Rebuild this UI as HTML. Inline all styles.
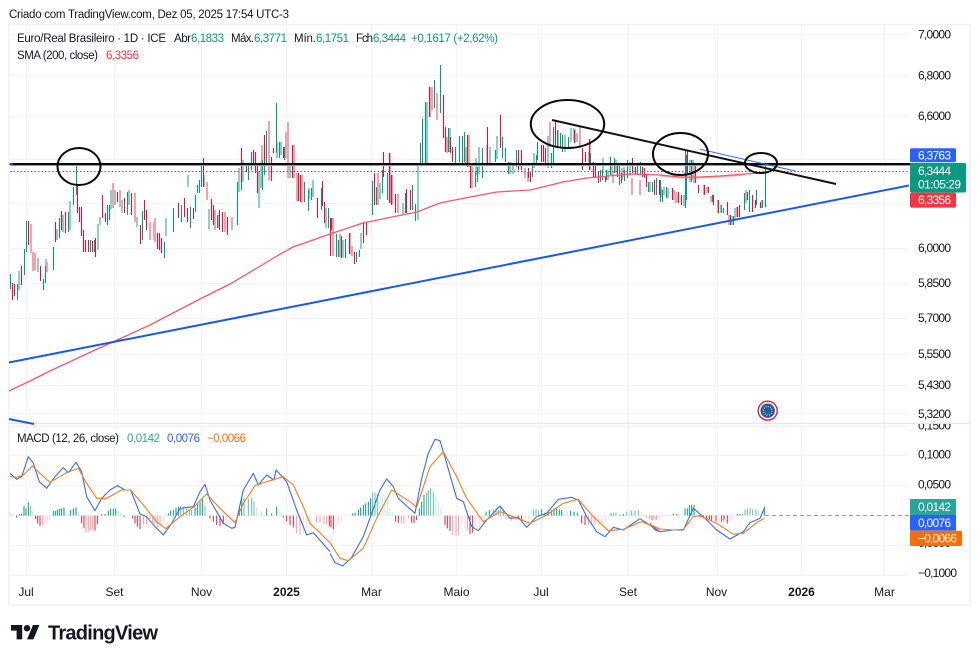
<!DOCTYPE html>
<html><head><meta charset="utf-8"><title>Euro/Real</title>
<style>
html,body{margin:0;padding:0;background:#fff;width:980px;height:661px;overflow:hidden}
svg{display:block;filter:blur(.3px)}
text{font-family:"Liberation Sans",sans-serif;font-size:11.5px;fill:#131722}
.ax{font-size:12px}
.w{fill:#fff;font-size:12px}
.g{fill:#089981}.r{fill:#f23645}.b{fill:#2962ff}.o{fill:#ff6d00}
.h path{vector-effect:non-scaling-stroke}
</style></head><body>
<svg width="980" height="661" viewBox="0 0 980 661" xmlns="http://www.w3.org/2000/svg">
<rect width="980" height="661" fill="#fff"/>
<text x="9" y="18" textLength="280">Criado com TradingView.com, Dez 05, 2025 17:54 UTC-3</text>
<rect x="9" y="24.5" width="961" height="580.5" fill="none" stroke="#f0f1f3" stroke-width="1.5"/>
<!-- grid -->
<path stroke="#f2f3f5" fill="none" d="M26.5 25V575M114.5 25V575M201.5 25V575M286.5 25V575M371.5 25V575M456.5 25V575M541.5 25V575M628.5 25V575M717.5 25V575M801.5 25V575M884.5 25V575M10 34.5H909M10 75.5H909M10 116.5H909M10 159.5H909M10 203.5H909M10 248.5H909M10 283.5H909M10 318.5H909M10 354.5H909M10 385.5H909M10 413.5H909M10 426.5H909M10 455.5H909M10 485.5H909M10 515.5H909M10 545.5H909M10 575.5H909"/>
<path stroke="#e4e6ea" stroke-width="1.2" d="M9 423.5H970"/>
<!-- candles pale -->
<g fill="none">
<path stroke="#8fd0c4" stroke-width="2" d="M19 271V290M38 258V272M46 259V271M57 229V240M63 215V232M70 201V230M98 224V250M100 217V225M111 190V209M115 190V205M122 200V213M129 190V205M137 217V227M166 218V236M188 175V187M204 175V187M209 209V229M219 215V228M232 217V230M239 168V192M243 160V182M259 172V208M261 162V188M277 142V158M281 142V155M290 163V178M309 188V199M313 180V197M326 208V228M340 234V257M343 240V257M361 233V249M378 187V205M380 183V199M403 203V215M418 165V220M427 102V165M450 128V152M466 147V163M476 158V175M479 147V174M490 147V163M497 136V159M510 162V174M513 165V174M534 153V168M548 136V168M558 130V148M565 135V152M571 128V142M574 128V140M577 133V142M589 152V162M603 158V173M612 163V175M661 187V197M664 187V195M678 195V202M684 195V206M690 160V182M693 160V180M721 205V213M732 216V225M735 208V220M746 190V203M762 200V208M608 170V180M616 160V173M622 168V180M630 162V176M650 182V192M668 188V198"/>
<path stroke="#f5a3a9" stroke-width="2" d="M31 224V253M33 252V271M35 253V270M47 262V272M113 183V208M120 190V207M135 193V222M150 222V240M154 222V240M155 218V242M207 182V200M215 210V230M225 212V232M232 217V228M262 145V163M269 121V180M286 132V158M288 122V178M294 145V178M297 173V201M302 175V202M333 218V256M350 233V254M352 246V256M378 173V205M390 153V203M392 175V205M398 194V213M430 87V117M432 87V110M437 93V120M447 137V153M469 135V167M472 163V188M487 145V166M525 168V178M528 172V182M550 122V147M575 130V143M580 127V148M590 139V170M613 172V183M624 167V177M632 178V195M640 180V195M694 163V183M704 185V195M707 187V193M711 196V202M718 200V213M729 215V225M737 207V217M674 190V200M676 192V203"/>
<path stroke="#089981" stroke-width="1.100" d="M10.500 274V289M17.500 284V300M24.500 249V275M26.500 221V252M43.500 279V290M45.500 266V283M53.500 247V270M59.500 218V238M68.500 212V232M73.500 187V205M76.500 163V195M90.500 240V252M94.500 240V252M107.500 205V225M109.500 205V220M127.500 192V215M142.500 211V240M164.500 242V258M173.500 208V232M181.500 205V222M190.500 207V228M195.500 195V212M197.500 185V193M199.500 180V193M201.500 163V187M213.500 215V225M217.500 215V228M237.500 182V225M241.500 170V190M248.500 163V180M251.500 152V170M262.500 160V190M264.500 150V175M266.500 131V165M276.500 103V153M279.500 142V158M284.500 147V160M304.500 182V202M308.500 190V211M311.500 188V200M321.500 188V210M328.500 208V228M336.500 234V257M338.500 240V257M345.500 239V258M356.500 252V262M359.500 250V257M372.500 181V215M376.500 187V205M382.500 170V193M387.500 173V200M405.500 193V213M412.500 185V210M415.500 204V221M420.500 143V165M422.500 119V165M425.500 102V165M434.500 80V108M440.500 65V113M448.500 128V152M455.500 147V163M459.500 136V162M462.500 136V163M464.500 132V162M475.500 172V187M477.500 167V182M482.500 148V178M495.500 150V162M502.500 137V158M505.500 148V162M508.500 162V174M516.500 150V167M532.500 165V177M536.500 155V165M537.500 142V160M551.500 153V168M553.500 127V163M557.500 130V148M560.500 133V147M562.500 135V152M568.500 137V148M590.500 153V165M600.500 170V182M602.500 170V180M606.500 170V180M610.500 157V175M614.500 158V173M619.500 165V185M624.500 170V181M627.500 160V178M637.500 163V175M640.500 162V175M648.500 182V192M652.500 182V192M656.500 178V195M660.500 180V202M662.500 190V202M666.500 187V198M685.500 150V208M686.500 155V200M691.500 160V182M712.500 195V202M721.500 205V213M723.500 208V213M733.500 216V225M744.500 193V210M749.500 190V212M756.500 190V205M762.500 200V208M765.500 165V207"/>
<path stroke="#d7153f" stroke-width="1.100" d="M12.500 283V300M14.500 284V296M21.500 266V285M28.500 221V245M40.500 266V281M55.500 222V242M61.500 211V230M65.500 212V233M77.500 185V213M79.500 207V222M81.500 207V236M83.500 230V252M85.500 240V252M88.500 240V252M92.500 241V252M95.500 238V257M102.500 195V218M105.500 213V222M117.500 192V202M124.500 198V213M131.500 193V215M140.500 225V244M144.500 200V220M146.500 210V230M157.500 233V249M159.500 233V250M161.500 238V253M178.500 203V218M184.500 198V217M187.500 208V222M193.500 208V219M203.500 158V187M211.500 199V220M213.500 205V225M219.500 210V230M222.500 212V232M227.500 217V235M241.500 148V182M246.500 163V172M253.500 150V165M255.500 152V173M257.500 163V193M264.500 135V163M271.500 157V181M273.500 148V153M283.500 147V158M292.500 145V178M298.500 173V201M300.500 175V202M317.500 198V218M322.500 181V206M324.500 202V223M330.500 218V256M331.500 218V230M341.500 236V258M349.500 233V254M354.500 252V264M363.500 223V243M366.500 222V235M374.500 173V205M383.500 152V177M389.500 153V203M391.500 175V205M395.500 194V213M406.500 189V213M410.500 190V210M429.500 87V117M443.500 95V138M445.500 127V152M450.500 137V153M452.500 147V162M467.500 135V167M470.500 163V188M487.500 127V165M500.500 115V148M518.500 150V170M521.500 150V170M528.500 168V178M530.500 172V182M545.500 148V163M543.500 145V162M541.500 145V162M555.500 122V147M574.500 130V143M582.500 148V170M585.500 152V162M589.500 139V170M593.500 162V177M595.500 163V178M598.500 172V183M605.500 177V182M617.500 166V177M621.500 173V183M632.500 158V173M635.500 167V174M642.500 167V177M644.500 168V178M646.500 175V187M654.500 180V195M659.500 180V195M672.500 188V200M678.500 192V203M681.500 195V205M687.500 150V173M695.500 163V183M698.500 185V193M704.500 185V195M708.500 187V193M713.500 195V205M718.500 200V213M727.500 202V215M730.500 215V225M737.500 207V217M739.500 205V217M747.500 192V200M752.500 195V212M755.500 200V208M760.500 202V208"/>
</g>
<!-- SMA -->
<path fill="none" stroke="#ef5a69" stroke-width="1.300" d="M9 391L30 381L50 371L80 357L115 341L150 325L200 299L230 284L257 268L277 256L293 247L313 240L333 233L363 223L397 216L417 212L440 203L470 197L497 192L530 190L563 182L587 178L630 174L660 175L680 177L700 177L720 176L745 174L762 173"/>
<path fill="none" stroke="#ef5a69" stroke-width="1" opacity=".5" d="M660 176L680 178L700 178L720 177L745 175"/>
<!-- levels -->
<path d="M10 171.500H909" stroke="#089981" stroke-width="1" stroke-dasharray="1.500 2"/>
<path d="M10 165.500H947" stroke="#9a9a9a" stroke-width="1"/>
<path d="M10 164H947" stroke="#0a0a0a" stroke-width="2"/>
<path d="M9 164H13" stroke="#2962ff" stroke-width="1.500"/>
<!-- trendlines -->
<path d="M9 362.500L909 185.500" stroke="#1a5ae0" stroke-width="2"/>
<path d="M9 419L34 424" stroke="#1a5ae0" stroke-width="2"/>
<path d="M700 150L796 172" stroke="#2962ff" stroke-width="1" transform="translate(0,-.800)"/>
<path d="M552 120L836 184" stroke="#111" stroke-width="2"/>
<g fill="none" stroke="#0a0a0a" stroke-width="2">
<ellipse cx="79" cy="166.500" rx="21.500" ry="18.500"/>
<ellipse cx="567.500" cy="124" rx="36.700" ry="24"/>
<ellipse cx="680.500" cy="154" rx="27.500" ry="21"/>
<ellipse cx="761" cy="163" rx="16" ry="10"/>
</g>
<!-- EU icon -->
<circle cx="767.700" cy="410.700" r="9.500" fill="#fff" stroke="#e01e3c" stroke-width="1.400"/>
<circle cx="767.700" cy="410.700" r="7.200" fill="#1d5ea8"/>
<circle cx="767.700" cy="410.700" r="4.300" fill="none" stroke="#f0d030" stroke-width="1.300" stroke-dasharray="1 1.250"/>
<!-- legend -->
<text x="17" y="42" textLength="149">Euro/Real Brasileiro · 1D · ICE</text>
<text x="174" y="42" textLength="17">Abr</text><text class="g" x="191" y="42" textLength="33">6,1833</text>
<text x="231" y="42" textLength="23">Máx.</text><text class="g" x="254" y="42" textLength="33">6,3771</text>
<text x="294" y="42" textLength="22">Mín.</text><text class="g" x="316" y="42" textLength="33">6,1751</text>
<text x="356" y="42" textLength="17">Fch</text><text class="g" x="373" y="42" textLength="33">6,3444</text>
<text class="g" x="411" y="42" textLength="87">+0,1617 (+2,62%)</text>
<text x="17" y="59" textLength="81">SMA (200, close)</text><text class="r" x="106" y="59" textLength="33">6,3356</text>
<!-- histogram -->
<g fill="none" class="h">
<g transform="translate(0,420) scale(.33333)" stroke-width="1">
<path stroke="#b7e3dc" d="M30 287V278M37 287V282M98 287V272M198 287V278M205 287V282M235 287V275M355 287V270M362 287V277M770 287V262M785 287V275M840 287V278"/>
<path stroke="#5fbfb0" d="M92 287V258M542 287V258M550 287V262M560 287V265M568 287V270M575 287V270M615 287V258M732 287V232M745 287V235M755 287V232M762 287V245"/>
<path stroke="#089981" d="M58 287V282M65 287V280M72 287V258M78 287V265M85 287V247M160 287V273M166 287V273M172 287V270M178 287V267M185 287V265M192 287V262M212 287V270M220 287V265M228 287V262M305 287V282M315 287V282M325 287V272M332 287V266M340 287V266M347 287V266M505 287V280M512 287V272M520 287V270M528 287V263M535 287V260M585 287V262M592 287V250M600 287V245M607 287V235M718 287V260M725 287V235M800 287V265M815 287V280M830 287V260"/>
<path stroke="#fcd5d8" d="M135 287V315M142 287V312M148 287V300M298 287V295M490 287V305M498 287V295M680 287V315M690 287V312M700 287V305M910 287V340M920 287V325M930 287V310"/>
<path stroke="#f99ba3" d="M128 287V315M258 287V338M265 287V335M272 287V332M278 287V330M430 287V312M440 287V312M450 287V297M458 287V308M465 287V312M472 287V322M480 287V318M900 287V345M890 287V340M950 287V308M960 287V308M972 287V312M980 287V312"/>
<path stroke="#e2263f" d="M50 287V293M107 287V297M113 287V310M120 287V318M245 287V310M252 287V325M285 287V332M292 287V312M372 287V291M398 287V295M405 287V310M412 287V320M420 287V328M630 287V295M640 287V305M650 287V315M660 287V318M670 287V310M850 287V292M860 287V305M870 287V315M880 287V322M988 287V318"/>
</g>
<g transform="translate(330,420) scale(.33333)" stroke-width="1">
<path stroke="#c4e8e2" d="M60 287V282M150 287V225M158 287V222M165 287V225M172 287V240M180 287V262M187 287V275M318 287V230M325 287V245M333 287V265M705 287V278M712 287V275M935 287V275M898 287V272"/>
<path stroke="#5fbfb0" d="M128 287V218M135 287V218M142 287V222M290 287V218M295 287V210M302 287V205M310 287V215M490 287V268M498 287V265M505 287V270M512 287V262M520 287V268M610 287V268M618 287V268M625 287V272M850 287V278M858 287V278M890 287V275M905 287V272M915 287V272M925 287V270"/>
<path stroke="#089981" d="M68 287V280M75 287V278M85 287V268M92 287V262M100 287V255M107 287V250M115 287V245M122 287V235M268 287V265M275 287V245M282 287V225M468 287V275M478 287V270M635 287V268M645 287V278M655 287V272M665 287V270M672 287V265M680 287V262M688 287V268M695 287V270M722 287V272M732 287V275M742 287V278M843 287V280M870 287V284M880 287V282"/>
<path stroke="#fcd5d8" d="M18 287V318M25 287V312M35 287V305M45 287V290M395 287V318M405 287V325M438 287V325M448 287V325M455 287V315M462 287V310M585 287V305M595 287V300M805 287V310M815 287V310M825 287V305M835 287V295"/>
<path stroke="#f99ba3" d="M215 287V310M222 287V310M235 287V295M368 287V345M378 287V348M386 287V345M412 287V330M535 287V298M545 287V302M555 287V300M775 287V315M785 287V315M795 287V315M948 287V295M958 287V298M968 287V300M978 287V300"/>
<path stroke="#e2263f" d="M3 287V322M10 287V328M197 287V305M205 287V308M245 287V308M252 287V310M260 287V300M345 287V315M352 287V325M360 287V333M420 287V342M428 287V338M565 287V298M575 287V300M755 287V310M765 287V315"/>
</g>
<g transform="translate(650,390) scale(.33333)" stroke-width="1">
<path stroke="#f99ba3" d="M5 376V390M12 376V388M20 376V388"/>
<path stroke="#fcd5d8" d="M28 376V385M35 376V382M205 376V395M240 376V395M248 376V385"/>
<path stroke="#5fbfb0" d="M278 376V370M285 376V360M292 376V355M300 376V355M308 376V358M318 376V358"/>
<path stroke="#c4e8e2" d="M325 376V360M335 376V365"/>
<path stroke="#089981" d="M70 376V372M80 376V372M88 376V375M105 376V355M112 376V355M118 376V345M125 376V345M132 376V345M262 376V372M270 376V372M343 376V352"/>
<path stroke="#e2263f" d="M150 376V382M160 376V385M170 376V388M178 376V388M185 376V392M198 376V395M215 376V395M222 376V392M232 376V400"/>
</g>
</g>
<path d="M765 515.500H909" stroke="#9a9ca3" stroke-width="1" stroke-dasharray="4 3"/>
<!-- MACD lines -->
<g fill="none" stroke-linejoin="round" stroke-width="1.100" class="h">
<g transform="translate(0,420) scale(.33333)">
<path stroke="#3a6fe0" d="M30 160L50 178L65 170L85 110L100 130L118 185L140 205L165 170L190 143L205 158L228 127L245 155L260 230L285 272L305 235L330 210L352 197L375 210L392 210L420 282L440 290L465 320L490 345L515 310L540 265L580 260L600 215L615 193L630 240L670 310L695 325L705 322L730 210L760 160L775 195L800 165L822 180L828 150L860 185L890 270L920 345L940 338L990 395"/>
<path stroke="#f57c20" d="M30 170L50 172L70 165L97 138L125 165L150 187L200 158L235 145L260 190L290 235L320 235L365 210L392 210L430 255L470 305L497 326L540 290L580 262L620 222L660 265L705 308L730 250L765 197L800 185L850 170L880 195L910 260L930 310L990 368"/>
</g>
<g transform="translate(330,420) scale(.33333)">
<path stroke="#3a6fe0" d="M0 400L15 428L38 438L65 412L100 350L125 280L150 210L170 177L190 200L205 235L230 258L255 280L275 175L295 100L315 58L330 62L350 130L380 235L400 245L425 320L445 332L470 300L510 258L540 295L565 292L590 322L620 290L650 280L685 238L725 232L745 240L770 290L800 335L825 350L850 322L880 330L930 296L990 335"/>
<path stroke="#f57c20" d="M0 368L30 415L55 422L100 385L140 295L185 210L240 245L260 262L300 140L340 95L380 170L410 235L460 305L510 275L600 310L650 285L700 250L745 238L790 290L835 332L880 328L935 305L990 328"/>
</g>
<g transform="translate(650,390) scale(.33333)">
<path stroke="#3a6fe0" d="M0 400L15 420L30 425L70 420L100 420L130 355L160 380L200 420L240 447L280 425L300 398L330 385L345 350"/>
<path stroke="#f57c20" d="M0 403L30 417L70 420L100 418L130 380L150 377L200 400L250 433L280 430L320 398L343 385"/>
</g>
</g>
<text x="17" y="442" textLength="102">MACD (12, 26, close)</text>
<text x="127" y="442" textLength="33" style="fill:#22ab94">0,0142</text>
<text class="b" x="167" y="442" textLength="33">0,0076</text>
<text class="o" x="207" y="442" textLength="39">−0,0066</text>
<!-- axis -->
<text class="ax" x="918" y="38.500" textLength="33">7,0000</text>
<text class="ax" x="918" y="79.500" textLength="33">6,8000</text>
<text class="ax" x="918" y="120" textLength="33">6,6000</text>
<text class="ax" x="918" y="252" textLength="33">6,0000</text>
<text class="ax" x="918" y="287" textLength="33">5,8500</text>
<text class="ax" x="918" y="322" textLength="33">5,7000</text>
<text class="ax" x="918" y="358" textLength="33">5,5500</text>
<text class="ax" x="918" y="389" textLength="33">5,4300</text>
<text class="ax" x="918" y="418" textLength="33">5,3200</text>
<clipPath id="cp"><rect x="910" y="424" width="60" height="12"/></clipPath>
<text class="ax" clip-path="url(#cp)" x="918" y="429.500" textLength="33">0,1500</text>
<text class="ax" x="918" y="458.500" textLength="33">0,1000</text>
<text class="ax" x="918" y="488.500" textLength="33">0,0500</text>
<text class="ax" x="918" y="547" textLength="33">0,0000</text>
<text class="ax" x="918" y="577" textLength="39">−0,1000</text>
<!-- price tags -->
<rect x="910" y="148.300" width="46" height="14" rx="1.500" fill="#2962ff"/>
<text class="w" x="918" y="159.500" textLength="33">6,3763</text>
<rect x="910" y="163" width="56" height="29.500" rx="1.500" fill="#089981"/>
<text class="w" x="918" y="175" textLength="33">6,3444</text>
<text class="w" x="918" y="188.500" textLength="43">01:05:29</text>
<rect x="910" y="192.600" width="46" height="15" rx="1.500" fill="#f23645"/>
<text class="w" x="918" y="204" textLength="33">6,3356</text>
<rect x="910" y="499" width="46" height="16" rx="1" fill="#26a69a"/>
<text class="w" x="918" y="511" textLength="33">0,0142</text>
<rect x="910" y="515" width="46" height="15.700" fill="#2962ff"/>
<text class="w" x="918" y="527" textLength="33">0,0076</text>
<rect x="910" y="530.700" width="52" height="15.300" rx="1.500" fill="#ff6d00"/>
<text class="w" x="918" y="542.500" textLength="39">−0,0066</text>
<!-- time -->
<text class="ax" x="26" y="596" text-anchor="middle">Jul</text>
<text class="ax" x="114.500" y="596" text-anchor="middle">Set</text>
<text class="ax" x="201.500" y="596" text-anchor="middle">Nov</text>
<text class="ax" x="286.500" y="596" text-anchor="middle" style="font-weight:700">2025</text>
<text class="ax" x="371.500" y="596" text-anchor="middle">Mar</text>
<text class="ax" x="456.500" y="596" text-anchor="middle">Maio</text>
<text class="ax" x="541" y="596" text-anchor="middle">Jul</text>
<text class="ax" x="628" y="596" text-anchor="middle">Set</text>
<text class="ax" x="716.500" y="596" text-anchor="middle">Nov</text>
<text class="ax" x="801.500" y="596" text-anchor="middle" style="font-weight:700">2026</text>
<text class="ax" x="884.500" y="596" text-anchor="middle">Mar</text>
<!-- logo -->
<g transform="translate(11,621.800) scale(.8)" fill="#131722">
<path d="M14 22H7V11H0V4h14v18zM28 22h-8l7.5-18h8L28 22z"/><circle cx="20" cy="8" r="4"/>
</g>
<text x="48" y="639.500" textLength="110" style="font-size:20px;font-weight:700;fill:#131722">TradingView</text>
</svg>
</body></html>
